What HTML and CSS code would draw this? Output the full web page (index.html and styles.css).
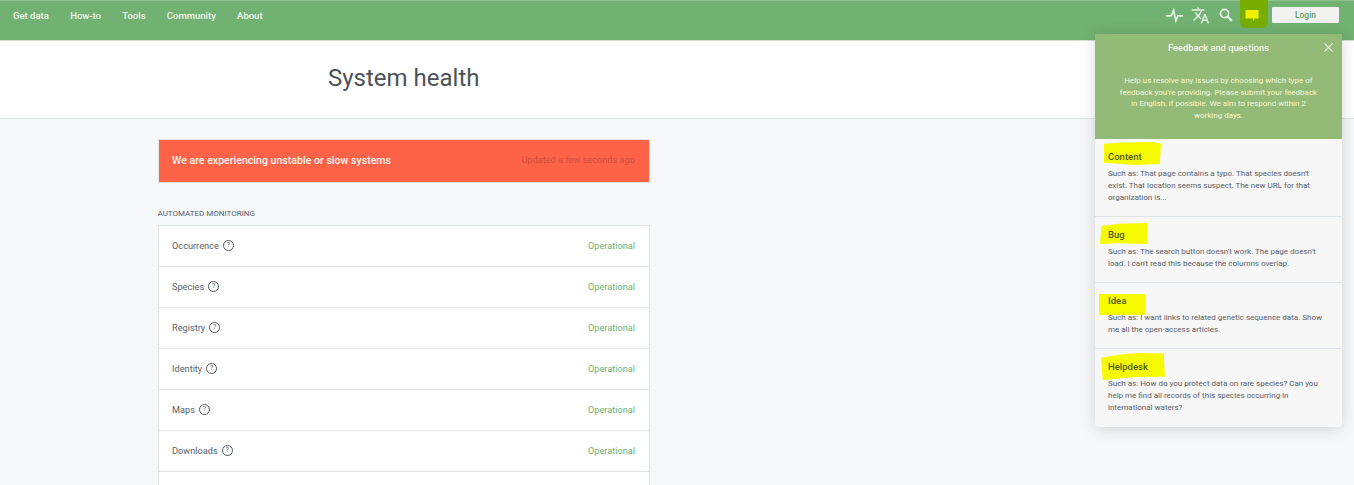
FILE: index.html
```html
<!DOCTYPE html>
<html lang="en">
<head>
<meta charset="utf-8">
<title>System health</title>
<link rel="stylesheet" href="styles.css">
</head>
<body>
<nav class="nav">
  <ul class="nav-links">
    <li>Get data</li><li>How-to</li><li>Tools</li><li>Community</li><li>About</li>
  </ul>
  <div class="nav-tools">
    <svg class="tool pulse" viewBox="0 0 18 18" width="17" height="17"><path d="M0 9.500h5.500L8 3.500l2.500 11 2-5H18" fill="none" stroke="#e6f0e6" stroke-width="1.800"/></svg>
    <svg class="tool translate" viewBox="0 0 24 24" width="19" height="19"><path fill="#e6f0e6" d="M12.870 15.070l-2.540-2.510.03-.03A17.520 17.520 0 0 0 14.070 6H17V4h-7V2H8v2H1v2h11.170C11.500 7.920 10.440 9.750 9 11.350 8.070 10.320 7.300 9.190 6.690 8h-2c.73 1.630 1.730 3.170 2.980 4.560l-5.090 5.020L4 19l5-5 3.110 3.110.76-2.040zM18.500 10h-2L12 22h2l1.120-3h4.750L21 22h2l-4.500-12zm-2.620 7l1.620-4.330L19.120 17h-3.240z"/></svg>
    <svg class="tool search" viewBox="0 0 16 16" width="14" height="14"><circle cx="6.300" cy="6.300" r="4.600" fill="none" stroke="#e6f0e6" stroke-width="2"/><path d="M9.800 9.800l5 5" stroke="#e6f0e6" stroke-width="2.400"/></svg>
    <span class="chat-mark"><svg viewBox="0 0 14 14" width="14" height="14"><path fill="#f0f000" d="M.5 1h13v8.500H9.500L8 12.500V9.500H.5z"/></svg></span>
    <button class="login">Login</button>
  </div>
</nav>
<header class="head"><h1>System health</h1></header>
<main class="content">
  <section class="alert">
    <strong>We are experiencing unstable or slow systems</strong>
    <span>Updated a few seconds ago</span>
  </section>
  <h2 class="section-title">AUTOMATED MONITORING</h2>
  <ul class="services">
    <li><span class="name">Occurrence <i class="q">?</i></span><span class="ok">Operational</span></li>
    <li><span class="name">Species <i class="q">?</i></span><span class="ok">Operational</span></li>
    <li><span class="name">Registry <i class="q">?</i></span><span class="ok">Operational</span></li>
    <li><span class="name">Identity <i class="q">?</i></span><span class="ok">Operational</span></li>
    <li><span class="name">Maps <i class="q">?</i></span><span class="ok">Operational</span></li>
    <li><span class="name">Downloads <i class="q">?</i></span><span class="ok">Operational</span></li>
    <li></li>
  </ul>
</main>
<aside class="popup">
  <div class="popup-head">
    <div class="popup-title">Feedback and questions</div>
    <svg class="close" viewBox="0 0 10 10" width="9" height="9"><path d="M.5.500l9 9M9.500.500l-9 9" stroke="#f1f5ec" stroke-width="1.200"/></svg>
    <p>Help us resolve any issues by choosing which type of feedback you're providing. Please submit your feedback in English, if possible. We aim to respond within 2 working days.</p>
  </div>
  <div class="item item-content">
    <h3><mark class="m-content">Content</mark></h3>
    <p>Such as: That page contains a typo. That species doesn't exist. That location seems suspect. The new URL for that organization is...</p>
  </div>
  <div class="item item-bug">
    <h3><mark class="m-bug">Bug</mark></h3>
    <p>Such as: The search button doesn't work. The page doesn't load. I can't read this because the columns overlap.</p>
  </div>
  <div class="item item-idea">
    <h3><mark class="m-idea">Idea</mark></h3>
    <p>Such as: I want links to related genetic sequence data. Show me all the open-access articles.</p>
  </div>
  <div class="item item-help">
    <h3><mark class="m-help">Helpdesk</mark></h3>
    <p>Such as: How do you protect data on rare species? Can you help me find all records of this species occurring in international waters?</p>
  </div>
</aside>
</body>
</html>
```
FILE: styles.css
```css
* { box-sizing: border-box; }
html, body { margin: 0; height: 485px; overflow: hidden; }
body { background: #f7f8fa; font-family: Roboto, "Liberation Sans", sans-serif; color: #50565f; position: relative; }
ul { list-style: none; margin: 0; padding: 0; }

.nav { height: 41px; background: #71b171; border-top: 1px solid #8cc08c; border-bottom: 1px solid #d3ddd3; display: flex; justify-content: space-between; padding: 0 15px 0 13px; }
.nav-links { display: flex; gap: 21.300px; padding-top: 8.500px; color: #f2f7f2; font-size: 9.500px; font-weight: 500; line-height: 12px; }
.nav-tools { display: flex; align-items: flex-start; }
.tool { display: block; flex: none; }
.pulse { margin: 6px 0 0 0; }
.translate { margin: 5px 0 0 8px; }
.search { margin: 7px 0 0 9px; }
.chat-mark { width: 28px; height: 28px; margin: -1px 0 0 7px; background: #76ad00; border-radius: 0 0 6px 6px; display: flex; align-items: center; justify-content: center; padding: 3px 5px 0 0; }
.login { width: 67px; height: 16px; margin: 6px 0 0 4px; border: 0; border-radius: 1px; background: #f2f3f1; color: #5f9c5f; font: 500 8.500px/16px Roboto, sans-serif; padding: 0; }

.head { height: 78px; background: #fff; border-bottom: 1px solid #dfe3e8; padding: 22px 0 0 328px; }
.head h1 { margin: 0; font-size: 24px; font-weight: 400; line-height: 30px; color: #4c5158; }

.content { width: 492px; margin: 20px 0 0 158px; }
.alert { height: 44px; background: #ff6347; border: 1px solid #e2e5e8; display: flex; justify-content: space-between; align-items: center; padding: 0 14px 2px 13px; }
.alert strong { color: #fdf3ee; font-size: 10.600px; font-weight: 500; }
.alert span { color: #c9503c; font-size: 9px; letter-spacing: .1px; }
.section-title { margin: 26px 0 0 -.5px; font-size: 8px; font-weight: 400; line-height: 10px; color: #5a6068; }
.services { margin-top: 6px; background: #fff; border: 1px solid #dfe3e8; border-bottom: 0; }
.services li { height: 41px; border-bottom: 1px solid #dfe3e8; display: flex; justify-content: space-between; align-items: center; padding: 0 14px 1px 13px; font-size: 9.200px; }
.name { display: flex; align-items: center; gap: 4px; color: #585e66; }
.q { width: 11px; height: 11px; border: 1px solid #50565f; border-radius: 50%; font-style: normal; font-size: 7px; line-height: 9px; text-align: center; }
.ok { color: #71b171; font-size: 9.200px; }

.popup { position: absolute; top: 34px; left: 1095px; width: 247px; height: 393px; background: #f7f7f8; border-radius: 0 0 4px 4px; box-shadow: 0 2px 16px rgba(0,0,0,.16); font-size: 8px; }
.popup-head { position: relative; height: 105px; background: #94ba77; color: #f6f7d8; text-align: center; padding: 8px 22px 0; }
.popup-title { color: #f4f7ec; font-size: 9.300px; font-weight: 500; line-height: 12px; }
.close { position: absolute; top: 9px; right: 9px; }
.popup-head p { margin: 21px 0 0; line-height: 11.500px; }
.item { position: relative; border-bottom: 1px solid #dde3e8; padding: 12px 13px 0; }
.item:last-child { border-bottom: 0; }
.item-content { height: 78px; }
.item-bug { height: 66px; }
.item-idea { height: 66px; }
.item h3 { margin: 0; font-size: 9.500px; font-weight: 500; line-height: 11px; height: 11px; color: #4d5a20; }
.item p { margin: 5.500px 0 0; line-height: 12px; color: #5b6069; position: relative; }
mark { display: inline-block; background: #f7fb00; color: #4e5a10; }
.m-content { width: 57px; height: 23px; margin: -9px 0 0 -4px; padding: 9px 0 0 4px; clip-path: polygon(0 8%, 30% 2%, 85% 0, 100% 8%, 98% 96%, 55% 100%, 0 90%); }
.m-bug { width: 47px; height: 21px; margin: -6px 0 0 -8px; padding: 6px 0 0 8px; clip-path: polygon(3% 14%, 40% 4%, 100% 0, 100% 100%, 40% 96%, 0 100%); }
.m-idea { width: 46px; height: 21px; margin: -1px 0 0 -9px; padding: 1px 0 0 9px; }
.m-help { width: 65px; height: 27px; margin: -8px 0 0 -8px; padding: 8px 0 0 8px; clip-path: polygon(2% 18%, 35% 5%, 60% 0, 98% 2%, 100% 88%, 50% 90%, 4% 100%); }
```
